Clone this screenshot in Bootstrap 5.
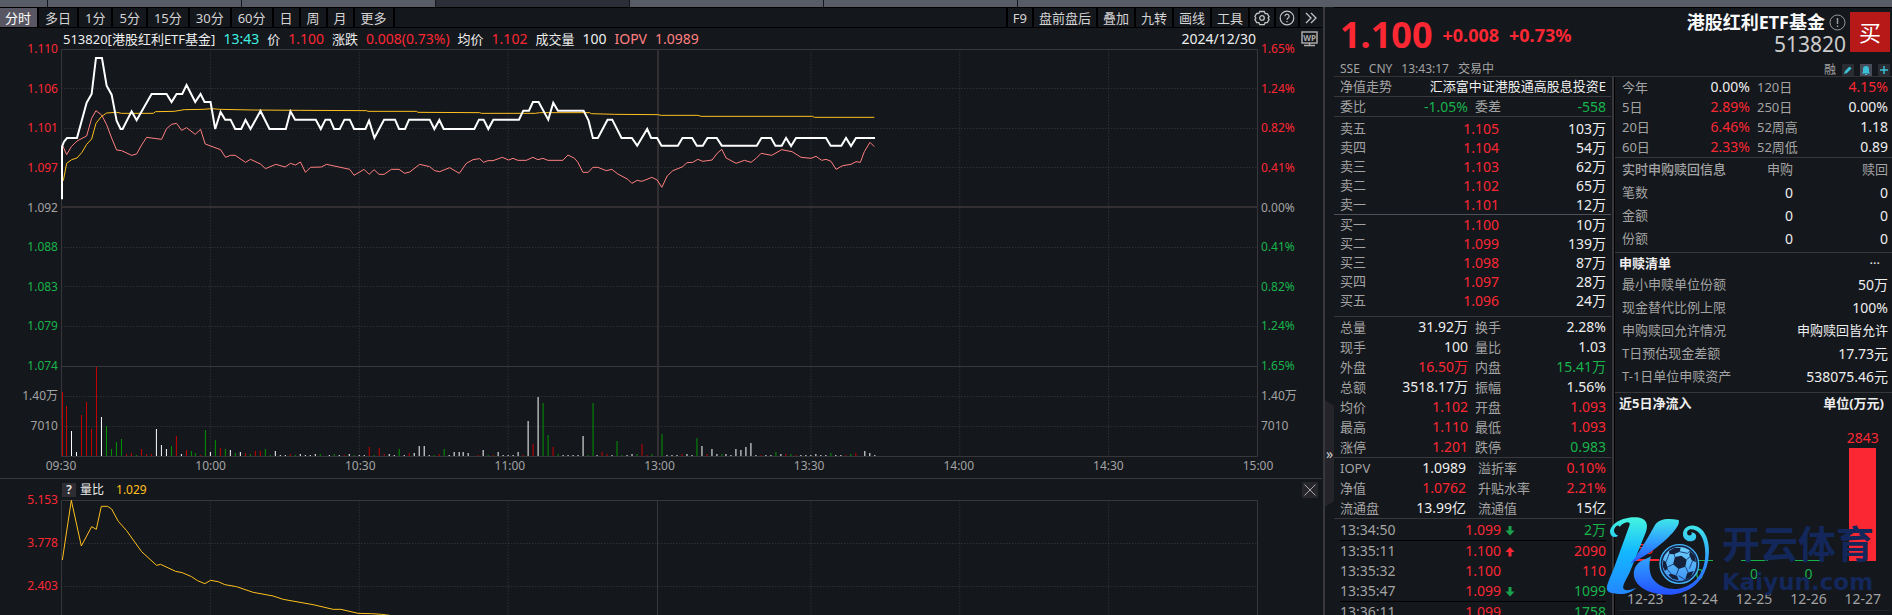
<!DOCTYPE html>
<html lang="zh-CN">
<head>
<meta charset="utf-8">
<meta name="viewport" content="width=device-width, initial-scale=1">
<title>513820 港股红利ETF基金</title>
<link href="https://cdn.jsdelivr.net/npm/bootstrap@5.3.0/dist/css/bootstrap.min.css" rel="stylesheet">
<style>
:root{--bg:#14171c;--line:#38383c;--red:#fb2834;--green:#19b34c;--dim:#a3a3a3;--amber:#ffc01e}
body{background:var(--bg);color:#eee;font-family:"Noto Sans","Noto Sans CJK SC",sans-serif;font-size:13px;line-height:20px;height:100vh;overflow:hidden}
button{background:none;border:0;padding:0;color:inherit;line-height:inherit}
.up{color:var(--red)}.down{color:var(--green)}.dim{color:var(--dim)}.amber{color:var(--amber)}.iopv{color:#ff8080}.clock{color:#3ff0e0}
.strip{height:7px;background:#14171c;gap:1px}
.strip span{background:#575c67;flex:0 0 193px}
.strip .first{flex-basis:47px}.strip .on{background:#2b2e37}.strip .rest{flex:1 1 auto}
.toolbar{height:21px;border-top:1px solid #000;border-bottom:1px solid #000}
.toolbar button{padding:0 6px;border-right:2px solid #000;height:19px;line-height:20px;color:#d4d4d4;white-space:nowrap}
.toolbar .chosen{background:#575662;color:#fff;padding-left:5px}
.toolbar .tools{border-left:2px solid #000}
.toolbar .tools button{padding:0 5px}
.toolbar .tools button:last-child{border-right:0}
.toolbar .tools .glyph{padding:0 3px}
.toolbar svg{display:block}
.legend-row{height:21px;line-height:22px;padding:0 3px 0 63px;gap:8px;white-space:nowrap}
.legend-row .fig{font-size:14px}
.legend-row svg{margin:3px 0 0 37px}
.plot{display:grid;grid-template-columns:61px minmax(0,1fr) 64px}
.axis{display:flex;flex-direction:column;justify-content:space-between;margin:-8px 0;font-size:12px;line-height:16px}
.axis.left{text-align:right;padding-right:3px}.axis.right{padding-left:3px}
.axis.volumes{height:46px;margin:22px 0 0}
.axis.ratio-levels{height:102px}
.levels{height:317px}
.plot svg{display:block;width:100%}
.price-svg{height:408px}.ratio-svg{height:115px}
.plot svg *{vector-effect:non-scaling-stroke;fill:none}
.times{font-size:12px;line-height:18px;margin:0 64px 0 61px;height:21px}
.times span{width:40px;margin:0 -20px;text-align:center}
.ratio-head{border-top:1px solid var(--line);height:22px;padding-left:62px;gap:4px;font-size:12px}
.ratio-head .help{background:#2e2d33;width:14px;height:14px;line-height:14px;font-weight:600}
.ratio-head .close{background:#26262b;width:16px;height:16px}
.edge{flex:0 0 11px;border-left:2px solid #38373b;margin-left:1px}
.edge button{background:#25242a;width:9px;height:107px;margin-top:393px;clip-path:polygon(0 0,100% 6px,100% 101px,0 100%);font-size:14px;color:#ccc}
.side{border-top:1px solid #000;flex:0 0 558px}
.quote-head{height:69px;border-bottom:1px solid #333;padding:4px 2px 0 6px}
.last-price{font-size:36px;line-height:46px;font-weight:700}
.quote-line{gap:10px;height:48px}
.change{font-size:18px;font-weight:700;line-height:38px}
.status{font-size:12px;line-height:18px;gap:9px}
.actions{gap:6px;padding-top:5px}
.fund{font-size:18px;line-height:20px;font-weight:700}
.code{font-size:21px;line-height:24px;color:#ccc}
.buy{background:#b71818;width:40px;height:40px;font-size:22px;color:#fff}
.mini{width:12px;height:12px;background:#2b2c33}
.mini.lit{background:#474b5a}
.mini svg{display:block}
.book{flex:0 0 280px;border-right:2px solid var(--line);padding-right:1px}
.info{border-left:1px solid #000}
table{width:100%;table-layout:fixed;border-collapse:separate;border-spacing:0}
td,th{padding:0;font-weight:400;white-space:nowrap;text-align:right}
th{color:var(--dim);text-align:left}
.num td{font-size:14px}
.num .cjk{font-size:13px}
.sect{padding:0 5px 0 6px;border-bottom:1px solid var(--line)}
.asks{padding-top:2px;border-color:#50505a}.bids{padding-bottom:6px}
.r19{line-height:19px}.r20{line-height:20px}.r23{line-height:23px}
.c-label{width:44px}.c-value{width:84px}.c-gap{width:7px}.c-price{width:115px}
.c-value2{width:82px}.c-gap2{width:12px}.c-label2{width:56px}
.c-wide{width:110px}.c-mid{width:61px}
.c-time{width:75px}.c-deal{width:86px}.c-arrow{width:14px}
.info .sect{padding:0 4px 0 7px}
.info .redeem{padding-bottom:2px}
.heavy{font-weight:700;margin-left:-3px}
.sub-head th{font-weight:500}
.tape{font-size:14px;padding:1px 5px 0 6px}
.tape td{height:20px;line-height:20px}
.tape .cut td{border-bottom:1px solid #000}
.flow{padding:0 2px 0 3px;flex:1 1 auto;font-size:14px}
.flow-col{flex:1 1 0;text-align:center}
.flow-plot{height:148px}
.flow-bar{width:27px;background:var(--red)}
.flow-zero{width:27px;height:1px;background:var(--green)}
.flow-under{height:25px;line-height:26px}
.logo{position:absolute;left:266px;top:501px;pointer-events:none}
.mark-text{position:absolute;left:388px;top:510px;color:#13275a;font-family:"Noto Sans CJK SC",sans-serif;font-size:38px;line-height:48px;font-weight:700;pointer-events:none}
.mark-text small{display:block;font:700 23px/24px "DejaVu Sans",sans-serif;margin-top:4px}
</style>
</head>
<body class="d-flex flex-column">
<div class="strip d-flex flex-shrink-0"><span class="first"></span><span></span><span></span><span class="on"></span><span></span><span></span><span class="rest"></span></div>
<main class="d-flex flex-grow-1 overflow-hidden">
<section class="flex-grow-1 overflow-hidden">
  <nav class="toolbar d-flex">
    <button class="chosen">分时</button><button>多日</button><button>1分</button><button>5分</button><button>15分</button><button>30分</button><button>60分</button><button>日</button><button>周</button><button>月</button><button>更多</button>
    <div class="tools d-flex ms-auto">
      <button>F9</button><button>盘前盘后</button><button>叠加</button><button>九转</button><button>画线</button><button>工具</button>
      <button class="glyph" aria-label="设置"><svg width="18" height="16" viewBox="-1 0 18 16" fill="none" stroke="#c4c4c4" stroke-width="1.3"><path d="M5.8 1.500h4.400l1 2 2.100.1 1.800 3-1 1.400 1 1.600-1.800 3-2.100.1-1 1.900H5.800l-1-1.900-2.100-.1-1.800-3L1.900 8l-1-1.500 1.800-3 2.100-.1z"/><circle cx="8" cy="8" r="2.300"/></svg></button>
      <button class="glyph" aria-label="帮助"><svg width="16" height="16" viewBox="0 0 16 16" fill="none" stroke="#c4c4c4" stroke-width="1.200"><circle cx="8" cy="8" r="6.800"/><path d="M5.900 6.300a2.100 2.100 0 1 1 3.200 1.800C8.300 8.600 8 8.900 8 9.800M8 11v1.300"/></svg></button>
      <button class="glyph" aria-label="展开"><svg width="16" height="16" viewBox="0 0 16 16" fill="none" stroke="#c4c4c4" stroke-width="1.300"><path d="M3 3l5 5-5 5M8 3l5 5-5 5"/></svg></button>
    </div>
  </nav>
  <div class="legend-row d-flex">
    <span>513820[港股红利ETF基金]</span><span class="clock fig">13:43</span><span>价</span><span class="up fig">1.100</span><span>涨跌</span><span class="up fig">0.008(0.73%)</span><span>均价</span><span class="up fig">1.102</span><span>成交量</span><span class="fig">100</span><span class="iopv fig">IOPV</span><span class="iopv fig">1.0989</span>
    <span class="ms-auto fig">2024/12/30</span>
    <svg width="18" height="16" viewBox="0 0 18 16"><rect x="1" y="1" width="15" height="11" fill="none" stroke="#aaa" stroke-width="1.500"/><path d="M8.500 12v2M3 14.500h11" stroke="#aaa" stroke-width="1.500"/><text x="8.500" y="10" font-size="8" font-weight="700" text-anchor="middle" fill="#aaa">WP</text></svg>
  </div>
  <div class="plot">
    <div>
      <div class="levels d-flex flex-column"><div class="axis left flex-grow-1 up"><span>1.110</span><span>1.106</span><span>1.101</span><span>1.097</span><span class="dim">1.092</span><span class="down">1.088</span><span class="down">1.083</span><span class="down">1.079</span><span class="down">1.074</span></div></div>
      <div class="axis left volumes dim"><span>1.40万</span><span>7010</span></div>
    </div>
    <svg class="price-svg" viewBox="183 147 3594 1224" preserveAspectRatio="none" role="img" aria-label="分时走势">
      <g stroke="#3c3c40" stroke-width="1" stroke-dasharray="1 2" shape-rendering="crispEdges">
        <path d="M184 265.500H3776M184 385.500H3776M184 502.500H3776M184 742.500H3776M184 859.500H3776M184 979.500H3776M184 1189.500H3776M184 1279.500H3776"/>
        <path d="M631.500 148V1370M1078.500 148V1370M1525.500 148V1370M2434.500 148V1370M2881.500 148V1370M3328.500 148V1370"/>
      </g>
      <g stroke="#38383c" shape-rendering="crispEdges"><path d="M184.500 148.500H3775.500V1369.500H184.500ZM184 1099.500H3776"/><path stroke="#332f33" stroke-width="2" d="M184 621H3776M1974 148V1370"/></g>
      <g id="volume" shape-rendering="crispEdges"></g>
      <polyline stroke="#ff8080" points="188,437 200,464 214,440 231,423 260,408 275,355 288,332 305,345 320,374 335,414 350,450 365,452 395,466 410,462 425,435 440,412 485,418 500,386 515,373 530,370 545,391 560,383 586,403 602,388 616,432 662,449 677,472 692,466 706,466 737,487 752,478 782,492 797,506 828,493 856,501 872,490 887,495 902,486 917,517 932,502 965,501 980,493 1050,508 1063,526 1093,508 1108,523 1123,509 1138,523 1153,523 1175,508 1198,508 1215,520 1230,516 1260,493 1290,500 1305,512 1320,515 1350,503 1379,520 1400,490 1420,479 1440,476 1452,487 1465,482 1480,482 1508,472 1527,480 1540,475 1555,481 1580,481 1600,472 1615,479 1630,475 1645,481 1690,481 1705,465 1725,475 1735,487 1750,517 1766,517 1780,502 1795,502 1820,512 1837,508 1855,522 1885,538 1897,550 1913,541 1927,544 1957,532 1973,540 1987,562 2003,528 2020,512 2050,500 2062,488 2080,487 2095,478 2110,484 2138,480 2153,460 2167,448 2180,474 2210,490 2235,481 2255,487 2270,475 2285,460 2317,466 2347,449 2378,455 2405,472 2435,475 2450,469 2467,481 2480,478 2495,484 2510,508 2530,497 2555,493 2570,485 2583,487 2595,455 2612,427 2625,440"/>
      <polyline stroke="#ffc01e" points="190,542 200,490 215,479 231,474 246,457 260,433 275,417 288,370 304,350 320,339 350,337 365,340 460,340 467,335 523,334 553,329 610,328 635,326 660,328 760,330 900,331 1100,332 1105,334 1250,334 1255,337 1440,338 1445,340 1607,340 1620,338 1770,338 1775,341 1845,343 1975,344 1985,346 2095,346 2105,349 2440,349 2445,352 2625,352"/>
      <polyline stroke="#fff" stroke-width="2" points="186,598 186,440 192,425 201,414 231,414 260,308 275,282 288,174 306,174 320,257 335,284 350,362 362,387 368,387 395,334 410,361 455,282 500,282 515,306 530,282 547,282 560,255 586,306 602,282 614,306 632,306 646,387 662,336 676,359 692,359 706,387 724,387 737,360 752,387 782,333 809,387 858,387 872,334 886,359 948,359 963,387 977,359 991,359 1003,387 1020,387 1034,359 1050,359 1063,387 1097,387 1108,362 1124,414 1153,359 1186,359 1198,387 1216,387 1228,359 1290,359 1304,387 1319,360 1332,387 1424,387 1438,359 1452,359 1466,387 1481,359 1558,359 1571,332 1588,332 1600,306 1617,306 1646,359 1661,308 1675,332 1752,332 1767,362 1780,414 1795,414 1824,359 1838,359 1866,414 1897,414 1913,437 1943,387 1955,414 1973,414 1986,437 2035,437 2049,414 2078,414 2092,437 2110,437 2124,414 2152,414 2167,437 2272,437 2286,414 2315,414 2328,437 2347,437 2360,414 2375,438 2390,414 2480,414 2494,437 2526,437 2540,414 2555,438 2570,414 2627,414"/>
    </svg>
    <div>
      <div class="levels d-flex flex-column"><div class="axis right flex-grow-1 up"><span>1.65%</span><span>1.24%</span><span>0.82%</span><span>0.41%</span><span class="dim">0.00%</span><span class="down">0.41%</span><span class="down">0.82%</span><span class="down">1.24%</span><span class="down">1.65%</span></div></div>
      <div class="axis right volumes dim"><span>1.40万</span><span>7010</span></div>
    </div>
  </div>
  <div class="times dim d-flex justify-content-between"><span>09:30</span><span>10:00</span><span>10:30</span><span>11:00</span><span>13:00</span><span>13:30</span><span>14:00</span><span>14:30</span><span>15:00</span></div>
  <div class="ratio-head d-flex align-items-center"><button class="help">?</button><span>量比</span><span class="amber ms-2">1.029</span>
    <button class="close ms-auto me-1" aria-label="关闭"><svg class="d-block" width="16" height="16" viewBox="0 0 16 16" stroke="#aaa"><path d="M2.500 2.500l11 11M13.500 2.500l-11 11"/></svg></button></div>
  <div class="plot">
    <div><div class="axis left up ratio-levels"><span>5.153</span><span>3.778</span><span>2.403</span></div></div>
    <svg class="ratio-svg" viewBox="183 1500 3594 345" preserveAspectRatio="none" role="img" aria-label="量比走势">
      <g stroke="#3c3c40" stroke-dasharray="1 2" shape-rendering="crispEdges"><path d="M184 1630.500H3776M184 1759.500H3776M631.500 1502V1850M1078.500 1502V1850M1525.500 1502V1850M2434.500 1502V1850M2881.500 1502V1850M3328.500 1502V1850"/></g>
      <path stroke="#38383c" shape-rendering="crispEdges" d="M184.500 1860V1501.500H3775.500V1860M1974 1502V1860"/>
      <polyline stroke="#ffc01e" points="187,1680 214,1501 244,1638 275,1580 289,1588 304,1519 323,1519 335,1527 355,1564 380,1592 425,1655 470,1696 482,1693 527,1714 547,1718 575,1730 593,1742 615,1751 632,1741 655,1745 675,1754 710,1760 760,1777 820,1788 850,1798 940,1814 1000,1828 1023,1828 1075,1840 1115,1841 1146,1843 1200,1850"/>
    </svg>
  </div>
</section>
<aside class="edge"><button aria-label="收起">»</button></aside>
<section class="side position-relative d-flex flex-column">
  <header class="quote-head d-flex justify-content-between flex-shrink-0">
    <div><div class="quote-line d-flex"><span class="last-price up">1.100</span><span class="change up pt-1">+0.008</span><span class="change up pt-1">+0.73%</span></div>
      <div class="status dim d-flex"><span>SSE</span><span>CNY</span><span>13:43:17</span><span>交易中</span></div></div>
    <div>
      <div class="d-flex gap-1"><div class="text-end"><div class="fund d-flex align-items-center gap-1 text-light">港股红利ETF基金 <svg width="17" height="17" viewBox="0 0 17 17" fill="none" stroke="#999"><circle cx="8.500" cy="8.500" r="7.500"/><path d="M8.500 4v6M8.500 11.500v1.500" stroke-width="1.500"/></svg></div><div class="code">513820</div></div><button class="buy">买</button></div>
      <div class="actions d-flex justify-content-end align-items-center dim status"><span>融</span>
        <button class="mini" aria-label="编辑"><svg width="12" height="12"><path d="M2 10l1-3 4.500-4.500 2 2L5 9z" fill="#3ac0d4"/></svg></button>
        <button class="mini lit" aria-label="提醒"><svg width="12" height="12"><path d="M2 9.500V9l1-1V5a3 3 0 0 1 6 0v3l1 1v.500zM5 10h2v1H5z" fill="#3ac0d4"/></svg></button>
        <button class="mini" aria-label="添加"><svg width="12" height="12"><path d="M6 2v8M2 6h8" stroke="#3ac0d4" stroke-width="1.500"/></svg></button></div>
    </div>
  </header>
  <div class="d-flex flex-grow-1">
  <div class="book">
    <div class="sect r19 d-flex justify-content-between"><span class="dim">净值走势</span><span>汇添富中证港股通高股息投资E</span></div>
    <div class="sect r19"><table class="num"><colgroup><col class="c-label"><col class="c-value"><col class="c-gap"><col class="c-label"><col></colgroup>
      <tr><th>委比</th><td class="down">-1.05%</td><td></td><th>委差</th><td class="down">-558</td></tr></table></div>
    <div class="sect asks r19"><table class="num"><colgroup><col class="c-label"><col class="c-price"><col></colgroup>
      <tr><th>卖五</th><td class="up">1.105</td><td>103万</td></tr><tr><th>卖四</th><td class="up">1.104</td><td>54万</td></tr><tr><th>卖三</th><td class="up">1.103</td><td>62万</td></tr><tr><th>卖二</th><td class="up">1.102</td><td>65万</td></tr><tr><th>卖一</th><td class="up">1.101</td><td>12万</td></tr></table></div>
    <div class="sect bids r19"><table class="num"><colgroup><col class="c-label"><col class="c-price"><col></colgroup>
      <tr><th>买一</th><td class="up">1.100</td><td>10万</td></tr><tr><th>买二</th><td class="up">1.099</td><td>139万</td></tr><tr><th>买三</th><td class="up">1.098</td><td>87万</td></tr><tr><th>买四</th><td class="up">1.097</td><td>28万</td></tr><tr><th>买五</th><td class="up">1.096</td><td>24万</td></tr></table></div>
    <div class="sect r20"><table class="num"><colgroup><col class="c-label"><col class="c-value"><col class="c-gap"><col class="c-label"><col></colgroup>
      <tr><th>总量</th><td>31.92万</td><td></td><th>换手</th><td>2.28%</td></tr><tr><th>现手</th><td>100</td><td></td><th>量比</th><td>1.03</td></tr><tr><th>外盘</th><td class="up">16.50万</td><td></td><th>内盘</th><td class="down">15.41万</td></tr><tr><th>总额</th><td>3518.17万</td><td></td><th>振幅</th><td>1.56%</td></tr><tr><th>均价</th><td class="up">1.102</td><td></td><th>开盘</th><td class="up">1.093</td></tr><tr><th>最高</th><td class="up">1.110</td><td></td><th>最低</th><td class="up">1.093</td></tr><tr><th>涨停</th><td class="up">1.201</td><td></td><th>跌停</th><td class="down">0.983</td></tr></table></div>
    <div class="sect r20"><table class="num"><colgroup><col class="c-label"><col class="c-value2"><col class="c-gap2"><col class="c-label2"><col></colgroup>
      <tr><th>IOPV</th><td>1.0989</td><td></td><th>溢折率</th><td class="up">0.10%</td></tr><tr><th>净值</th><td class="up">1.0762</td><td></td><th>升贴水率</th><td class="up">2.21%</td></tr><tr><th>流通盘</th><td>13.99亿</td><td></td><th>流通值</th><td>15亿</td></tr></table></div>
    <div class="tape"><table><colgroup><col class="c-time"><col class="c-deal"><col class="c-arrow"><col></colgroup>
      <tr class="cut"><td class="text-start dim">13:34:50</td><td class="up">1.099</td><td><svg width="10" height="10"><path d="M3.500 0h3v4.500H9.500L5 9.500.500 4.500h3z" fill="#19a34c"/></svg></td><td class="down">2万</td></tr>
      <tr><td class="text-start dim">13:35:11</td><td class="up">1.100</td><td><svg width="10" height="10"><path d="M3.500 9.500h3V5H9.500L5 0 .500 5h3z" fill="#fb2834"/></svg></td><td class="up">2090</td></tr>
      <tr><td class="text-start dim">13:35:32</td><td class="up">1.100</td><td></td><td class="up">110</td></tr>
      <tr class="cut"><td class="text-start dim">13:35:47</td><td class="up">1.099</td><td><svg width="10" height="10"><path d="M3.500 0h3v4.500H9.500L5 9.500.500 4.500h3z" fill="#19a34c"/></svg></td><td class="down">1099</td></tr>
      <tr><td class="text-start dim">13:36:11</td><td class="up">1.099</td><td></td><td class="down">1758</td></tr></table></div>
  </div>
  <div class="info flex-grow-1 d-flex flex-column">
    <div class="sect r20"><table class="num"><colgroup><col class="c-label"><col class="c-value"><col class="c-gap"><col class="c-label2"><col></colgroup>
      <tr><th>今年</th><td>0.00%</td><td></td><th>120日</th><td class="up">4.15%</td></tr><tr><th>5日</th><td class="up">2.89%</td><td></td><th>250日</th><td>0.00%</td></tr><tr><th>20日</th><td class="up">6.46%</td><td></td><th>52周高</th><td>1.18</td></tr><tr><th>60日</th><td class="up">2.33%</td><td></td><th>52周低</th><td>0.89</td></tr></table></div>
    <div class="sect redeem r23"><table class="num"><colgroup><col class="c-wide"><col class="c-mid"><col></colgroup>
      <tr class="sub-head"><th>实时申购赎回信息</th><td class="dim cjk">申购</td><td class="dim cjk">赎回</td></tr><tr><th>笔数</th><td>0</td><td>0</td></tr><tr><th>金额</th><td>0</td><td>0</td></tr><tr><th>份额</th><td>0</td><td>0</td></tr></table></div>
    <div class="sect r23"><div class="d-flex justify-content-between r20"><span class="heavy">申赎清单</span><button class="me-2" aria-label="更多">···</button></div>
      <table class="num mb-1"><tr><th>最小申赎单位份额</th><td>50万</td></tr><tr><th>现金替代比例上限</th><td>100%</td></tr><tr><th>申购赎回允许情况</th><td class="cjk">申购赎回皆允许</td></tr><tr><th>T日预估现金差额</th><td>17.73元</td></tr><tr><th>T-1日单位申赎资产</th><td>538075.46元</td></tr></table></div>
    <div class="d-flex justify-content-between fw-bold r20 ps-1 pe-2"><span>近5日净流入</span><span>单位(万元)</span></div>
    <div class="flow">
      <div class="flow-plot d-flex align-items-end">
        <div class="flow-col d-flex flex-column align-items-center"><span class="up">55</span><div class="flow-bar" style="height:2px"></div></div>
        <div class="flow-col d-flex flex-column align-items-center"><div class="flow-zero"></div></div>
        <div class="flow-col d-flex flex-column align-items-center"><div class="flow-zero"></div></div>
        <div class="flow-col d-flex flex-column align-items-center"><div class="flow-zero"></div></div>
        <div class="flow-col d-flex flex-column align-items-center"><span class="up">2843</span><div class="flow-bar" style="height:113px"></div></div>
      </div>
      <div class="flow-under d-flex down"><span class="flow-col"></span><span class="flow-col">0</span><span class="flow-col">0</span><span class="flow-col">0</span><span class="flow-col"></span></div>
      <div class="flow-under d-flex dim border-bottom border-dark"><span class="flow-col">12-23</span><span class="flow-col">12-24</span><span class="flow-col">12-25</span><span class="flow-col">12-26</span><span class="flow-col">12-27</span></div>
    </div>
  </div>
  </div>
  <svg class="logo" width="125" height="95" viewBox="0 0 375 285" aria-hidden="true">
    <defs>
      <linearGradient id="ga" x1="0" y1="0" x2="0" y2="1"><stop offset="0" stop-color="#45f5e0"/><stop offset=".45" stop-color="#12b8ff"/><stop offset="1" stop-color="#2388ff"/></linearGradient>
      <linearGradient id="gb" x1="0" y1="0" x2="0" y2="1"><stop offset="0" stop-color="#3fe6ea"/><stop offset=".5" stop-color="#2f9dff"/><stop offset="1" stop-color="#2450ff"/></linearGradient>
      <linearGradient id="gc" x1="0" y1="0" x2="0" y2="1"><stop offset="0" stop-color="#6fd0fa"/><stop offset="1" stop-color="#3f94f5"/></linearGradient>
    </defs>
    <path fill="url(#ga)" d="M59 54C55 45 47 50 43 60C40 70 47 77 55 80C44 89 31 83 30 69C31 44 68 23 110 25C138 27 146 44 138 68L91 185C80 211 63 233 72 241C81 247 95 241 108 236C93 254 66 258 39 253C18 249 18 238 24 221C31 201 39 187 46 166L88 50C94 35 75 38 65 47C62 50 60 52 59 54Z"/>
    <path fill="url(#gb)" d="M90 165C110 144 145 84 165 48C177 29 204 27 236 33C241 47 222 68 203 87C174 115 137 141 90 165Z"/>
    <path fill="url(#gb)" d="M153 142C145 165 147 197 162 214C186 241 227 248 262 231C303 211 320 166 315 119C311 80 294 60 270 61C257 66 259 82 272 79C278 75 276 73 273 70C286 70 293 81 286 91C276 102 253 98 249 79C247 60 263 46 283 50C317 56 333 101 325 151C316 208 281 250 216 257C165 260 120 243 105 212C96 190 105 168 122 157C136 150 145 147 153 142Z"/>
    <circle cx="238" cy="165" r="58" fill="#14264e" stroke="#43b7fb" stroke-width="4"/>
    <circle cx="238" cy="165" r="51" fill="url(#gc)"/>
    <g fill="#15203b"><path d="M225 144l19-4 16 12-4 21-20 7-17-14z"/><path d="M207 126l15-9 20-1-3 12-17 8-14-1zM270 126l14 14 4 20-13-6-7-16zM190 153l8 6 5 20-8 7-7-14zM262 191l19-5-9 18-17 9zM213 194l18 6 5 14-19-5-12-12z"/></g>
    <path fill="none" stroke="#1c4480" stroke-width="3" d="M222 135l4 12M238 128l24 5 8-7M260 152l10-9M256 173l9 18M278 155l-10 24M236 180l-7 19M219 166l-18 9M198 159l10-26M236 200l20 13M201 180l12 14"/>
  </svg>
  <div class="mark-text" aria-hidden="true">开云体育<small>Kaiyun.com</small></div>
</section>
</main>
<script src="https://cdn.jsdelivr.net/npm/bootstrap@5.3.0/dist/js/bootstrap.bundle.min.js"></script>
<script>
// Minute volume as x,top pairs, grouped by tick direction
const volume = {
  '#c80000': '187,186 199,228 244,255 259,216 274,297 289,111 379,372 394,369 424,357 439,372 454,372 529,318 559,360 601,375 661,354 736,369 766,363 781,363 871,372 1033,375 1108,351 1138,354 1153,372 1228,369 1318,372 1435,375 1480,375 1570,375 1600,342 1660,351 1807,366 1822,372 1927,342 1942,375 2047,372 2122,372 2284,375 2359,372 2389,375 2539,375 2569,369',
  '#009600': '319,288 334,357 349,336 364,327 409,375 514,348 574,363 586,369 616,300 646,330 676,357 706,369 751,372 796,357 811,375 886,375 961,372 1003,372 1063,375 1123,375 1198,357 1303,375 1333,357 1465,375 1630,219 1645,315 1675,372 1765,375 1780,219 1852,333 1867,375 1912,372 1957,372 1987,312 2092,324 2167,372 2329,366 2374,372 2494,369 2554,372',
  '#ffffff': '214,303 229,366 304,261 469,297 484,345 499,357 544,372 631,366 691,360 721,366 826,363 841,375 856,375 901,372 916,375 931,375 946,372 988,375 1018,375 1048,372 1078,375 1093,375 1168,372 1183,375 1213,375 1243,369 1258,348 1273,348 1288,375 1348,375 1363,366 1378,366 1390,366 1405,369 1450,360 1495,366 1510,375 1525,375 1540,375 1555,366 1585,273 1615,201 1690,375 1705,375 1720,375 1735,375 1750,318 1792,375 1837,375 1882,375 1897,372 2002,375 2017,375 2032,375 2062,372 2077,375 2107,348 2137,357 2152,372 2179,372 2194,375 2209,357 2224,360 2239,351 2254,339 2269,375 2299,375 2314,375 2344,372 2404,375 2419,375 2434,375 2449,372 2464,375 2479,375 2509,375 2524,375 2596,363 2611,369 2626,375'
};
for (const [color, bars] of Object.entries(volume)) {
  const path = document.createElementNS('http://www.w3.org/2000/svg', 'path');
  path.setAttribute('stroke', color);
  path.setAttribute('d', bars.split(' ').map(b => { const [x, top] = b.split(',').map(Number); return `M${x + .5} ${top + 990}V1368`; }).join(''));
  document.getElementById('volume').append(path);
}
</script>
</body>
</html>
